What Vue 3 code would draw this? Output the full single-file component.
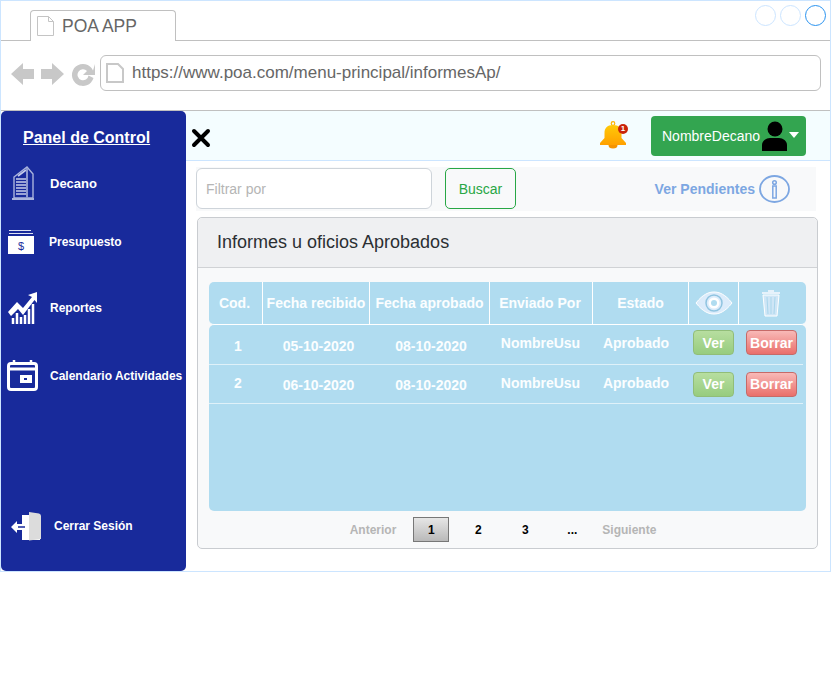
<script setup>
const columns = ['Cod.', 'Fecha recibido', 'Fecha aprobado', 'Enviado Por', 'Estado']
const rows = [
  { id: 1, received: '05-10-2020', approved: '08-10-2020', user: 'NombreUsu', state: 'Aprobado' },
  { id: 2, received: '06-10-2020', approved: '08-10-2020', user: 'NombreUsu', state: 'Aprobado' },
]
const pages = ['1', '2', '3', '...']
</script>

<template>
  <div class="window">
    <!-- pestaña -->
    <div class="tabbar">
      <div class="tab">
        <svg class="doc" width="17" height="20" viewBox="0 0 17 20">
          <path d="M.5.5h11l5 5v14H.5z M11.5.5v5h5" fill="#fff" stroke="#c4c4c4" />
        </svg>
        <span>POA APP</span>
      </div>
      <div class="dots">
        <i></i><i></i><i class="on"></i>
      </div>
    </div>

    <!-- direccion -->
    <div class="addressbar">
      <svg class="nav" width="86" height="26" viewBox="0 0 86 26">
        <path d="M0 13 12 2v6h11v10H12v6z" fill="#c8c8c8" />
        <path d="M53 13 41 2v6H30v10h11v6z" fill="#c8c8c8" />
        <path d="M82 9.500A11 11 0 1 0 82.500 17l-5-2.500A5.500 5.500 0 1 1 76 10l-4 4h12V3z" fill="#c8c8c8" />
      </svg>
      <div class="url">
        <svg width="18" height="20" viewBox="0 0 18 20">
          <path d="M1 1h11l5 5v13H1z" fill="#fff" stroke="#c8c8c8" stroke-width="2" />
        </svg>
        <span>https://www.poa.com/menu-principal/informesAp/</span>
      </div>
    </div>

    <div class="app">
      <!-- menu lateral -->
      <aside class="sidebar">
        <h1>Panel de Control</h1>
        <a class="item decano">
          <svg width="22" height="34" viewBox="0 0 22 34">
            <path d="M2 11 15 1l6 7v24H2z" fill="none" stroke="#a9b3dc" stroke-width="1.400" />
            <path d="M4 13h10M4 16h10M4 19h10M4 22h10M4 25h10M4 28h10M6 10l8-6" stroke="#c6cdea" stroke-width="1.600" />
            <path d="M15 2v30" stroke="#8d99d0" stroke-width="2" />
            <path d="M0 33h22" stroke="#a9b3dc" stroke-width="2" />
          </svg>
          <span>Decano</span>
        </a>
        <a class="item presupuesto">
          <svg width="26" height="24" viewBox="0 0 26 24">
            <path d="M1 0h22v1H1zM1 3h24v1H1z" fill="#dfe3f4" />
            <path d="M0 6h26v18H0z" fill="#fff" />
            <text x="13" y="20" text-anchor="middle" font-size="11" font-weight="400" font-family="Liberation Sans" fill="#182a9b">$</text>
          </svg>
          <span>Presupuesto</span>
        </a>
        <a class="item reportes">
          <svg width="30" height="34" viewBox="0 0 30 34">
            <path d="M0 21 9 11l6 6L24 6l-4-2L29 1v11l-2.500-3L15 24l-5-6-7 7z" fill="#fff" />
            <path d="M5 33v-6M9 33V22M13 33v-7M17 33v-9M21 33V18M25 33V13" stroke="#fff" stroke-width="2.500" />
          </svg>
          <span>Reportes</span>
        </a>
        <a class="item calendario">
          <svg width="31" height="31" viewBox="0 0 31 31">
            <rect x="1.500" y="3.500" width="28" height="26" rx="2.500" fill="none" stroke="#fff" stroke-width="3" />
            <path d="M1 9h29" stroke="#fff" stroke-width="3" />
            <path d="M7 0v5M24 0v5" stroke="#fff" stroke-width="2.500" />
            <path d="M13 15h12v8H13z" fill="#fff" />
            <path d="M17 18h3v2h-3z" fill="#182a9b" />
          </svg>
          <span>Calendario Actividades</span>
        </a>
        <a class="item cerrar">
          <svg width="31" height="31" viewBox="0 0 31 31">
            <path d="M11 5h18v25H11z" fill="#fff" />
            <path d="M18 2l10 1.500q2 .5 2 2.500v23l-12 1.500z" fill="#dcdcdc" />
            <path d="M0 17l6-6v3h9.500v6H6v3z" fill="#fff" />
            <path d="M7 17h7" stroke="#182a9b" stroke-width="1.500" />
          </svg>
          <span>Cerrar Sesión</span>
        </a>
      </aside>

      <main class="content">
        <!-- barra superior -->
        <header class="topbar">
          <svg class="close" width="20" height="20" viewBox="0 0 20 20">
            <path d="M3 3l14 14M17 3 3 17" stroke="#000" stroke-width="4" stroke-linecap="round" />
          </svg>
          <div class="bell">
            <svg width="28" height="28" viewBox="0 0 28 28">
              <defs>
                <linearGradient id="bellfill" x1="0" y1="0" x2="0" y2="1">
                  <stop offset="0" stop-color="#ffca08" />
                  <stop offset="1" stop-color="#ffa000" />
                </linearGradient>
              </defs>
              <circle cx="14" cy="2.500" r="1.800" fill="none" stroke="#ffb300" stroke-width="1.200" />
              <path d="M14 4c6 0 8.500 3.500 8.500 8v5l4.500 5v2H1v-2l4.500-5v-5c0-4.500 2.500-8 8.500-8z" fill="url(#bellfill)" />
              <path d="M9.500 24h9a4.500 3.500 0 0 1-9 0z" fill="#f59300" />
            </svg>
            <b>1</b>
          </div>
          <button class="user">
            <span>NombreDecano</span>
            <svg width="27" height="30" viewBox="0 0 27 30">
              <circle cx="14" cy="8" r="7.500" fill="#000" />
              <path d="M1 30v-6c0-4 4-7 8-7h9c4 0 8 3 8 7v6z" fill="#000" />
            </svg>
            <em></em>
          </button>
        </header>

        <!-- filtro -->
        <div class="filter">
          <input class="search" type="text" placeholder="Filtrar por" />
          <button class="find">Buscar</button>
          <a class="pending">
            <span>Ver Pendientes</span>
            <svg width="31" height="28" viewBox="0 0 31 28">
              <ellipse cx="15.500" cy="14" rx="14.500" ry="13" fill="none" stroke="#7da7e2" stroke-width="1.800" />
              <path d="M13.800 11h3.400v12h-3.400z" fill="none" stroke="#7da7e2" stroke-width="1.500" />
              <circle cx="15.500" cy="7.500" r="1.800" fill="none" stroke="#7da7e2" stroke-width="1.500" />
            </svg>
          </a>
        </div>

        <!-- tarjeta -->
        <section class="card">
          <h2>Informes u oficios Aprobados</h2>
          <div class="card-body">
            <div class="thead">
              <div v-for="col in columns" :key="col">{{ col }}</div>
              <div>
                <svg width="38" height="24" viewBox="0 0 38 24">
                  <path d="M1 12C8 3 14 1 19 1s11 2 18 11c-7 9-13 11-18 11S8 21 1 12z" fill="#dcecfb" stroke="#fff" />
                  <circle cx="19" cy="12" r="8" fill="none" stroke="#90c4e0" stroke-width="1.500" />
                  <circle cx="19" cy="12" r="5.500" fill="#fff" />
                  <circle cx="19" cy="12" r="3" fill="#b0dcf0" />
                </svg>
              </div>
              <div>
                <svg class="trash" width="20" height="27" viewBox="0 0 20 27">
                  <path d="M1 3h18M7 1h6" stroke="#e6f2fb" stroke-width="2" />
                  <path d="M2 5l2 21h12l2-21z" fill="#cfe6f6" stroke="#fff" />
                  <path d="M6 7l1 17M10 7v17M14 7l-1 17" stroke="#a9d6ec" />
                </svg>
              </div>
            </div>
            <div class="tbody">
              <div v-for="row in rows" :key="row.id" class="row">
                <div class="cell id">{{ row.id }}</div>
                <div class="cell received">{{ row.received }}</div>
                <div class="cell approved">{{ row.approved }}</div>
                <div class="cell up user-cell">{{ row.user }}</div>
                <div class="cell up state">{{ row.state }}</div>
                <div class="cell act ver-cell"><button class="ver">Ver</button></div>
                <div class="cell act borrar-cell"><button class="borrar">Borrar</button></div>
              </div>
            </div>
            <nav class="pager">
              <span class="muted">Anterior</span>
              <span v-for="(p, i) in pages" :key="p" class="page" :class="{ active: i === 0 }">{{ p }}</span>
              <span class="muted">Siguiente</span>
            </nav>
          </div>
        </section>
      </main>
    </div>
  </div>
</template>

<style scoped>
.window {
  width: 831px;
  height: 572px;
  box-sizing: border-box;
  border: 1px solid #cce5ff;
  font-family: "Liberation Sans", Arial, sans-serif;
  background: #fff;
  display: flex;
  flex-direction: column;
}

/* ── navegador ── */
.tabbar {
  height: 40px;
  box-sizing: border-box;
  flex-shrink: 0;
  border-bottom: 1px solid #c0c0c0;
  display: flex;
  justify-content: space-between;
  align-items: flex-end;
  padding: 0 4px 0 29px;
}
.tab {
  width: 146px;
  height: 31px;
  box-sizing: border-box;
  border: 1px solid #c0c0c0;
  border-bottom: none;
  border-radius: 4px 4px 0 0;
  background: #fff;
  margin-bottom: -1px;
  display: flex;
  align-items: center;
  gap: 8px;
  padding-left: 6px;
  font-size: 17.500px;
  color: #666;
}
.dots {
  align-self: flex-start;
  display: flex;
  gap: 4px;
  margin-top: 4px;
}
.dots i {
  width: 21px;
  height: 21px;
  box-sizing: border-box;
  border: 1px solid #cce5ff;
  border-radius: 50%;
}
.dots i.on {
  border-color: #2a93f0;
}
.addressbar {
  height: 70px;
  flex-shrink: 0;
  box-sizing: border-box;
  border-bottom: 1px solid #c0c0c0;
  display: flex;
  align-items: flex-start;
  padding: 14px 9px 0 10px;
  gap: 3px;
}
.nav {
  margin-top: 6px;
}
.url {
  flex: 1;
  height: 36px;
  box-sizing: border-box;
  border: 1px solid #c0c0c0;
  border-radius: 6px;
  display: flex;
  align-items: center;
  gap: 8px;
  padding-left: 5px;
  font-size: 17px;
  color: #666;
}

/* ── app ── */
.app {
  flex: 1;
  display: flex;
  min-height: 0;
}
.sidebar {
  width: 185px;
  flex-shrink: 0;
  box-sizing: border-box;
  background: #182a9b;
  border-radius: 5px;
  color: #fff;
  padding-top: 17px;
  display: flex;
  flex-direction: column;
}
.sidebar h1 {
  margin: 0 0 0 22px;
  font-size: 16px;
  line-height: 19px;
  font-weight: 700;
  text-decoration: underline;
}
.item {
  display: flex;
  align-items: center;
  font-size: 12px;
  font-weight: 700;
  white-space: nowrap;
}
.decano {
  margin: 19px 0 0 11px;
  gap: 16px;
  font-size: 13px;
}
.presupuesto {
  margin: 30px 0 0 7px;
  gap: 15px;
}
.reportes {
  margin: 37px 0 0 7px;
  gap: 12px;
}
.calendario {
  margin: 35px 0 0 6px;
  gap: 12px;
}
.cerrar {
  margin: 119px 0 0 10px;
  gap: 12px;
}

.content {
  flex: 1;
  min-width: 0;
}
.topbar {
  height: 50px;
  box-sizing: border-box;
  background: #f4fdff;
  border-bottom: 1px solid #cce5ff;
  display: flex;
  align-items: center;
  padding: 0 24px 0 5px;
}
.close {
  margin-top: 4px;
}
.bell {
  position: relative;
  margin-left: auto;
  margin-right: 24px;
  width: 28px;
  height: 28px;
  margin-top: -2px;
}
.bell b {
  position: absolute;
  top: 3px;
  right: -1px;
  width: 10px;
  height: 10px;
  border-radius: 50%;
  background: #c9240b;
  color: #fff;
  font-size: 8px;
  line-height: 10px;
  text-align: center;
}
.user {
  width: 155px;
  height: 40px;
  margin-top: 1px;
  border: none;
  border-radius: 4px;
  background: #33a550;
  color: #fff;
  font: 14px "Liberation Sans", Arial, sans-serif;
  display: flex;
  align-items: center;
  padding: 0 0 0 11px;
}
.user svg {
  margin-left: 1px;
}
.user em {
  margin-left: 1px;
  margin-top: -3px;
  border: 5px solid transparent;
  border-top: 6px solid #fff;
  border-bottom: none;
}
.filter {
  margin: 6px 14px 0 10px;
  height: 44px;
  box-sizing: border-box;
  padding-top: 1px;
  background: #f8f9fa;
  display: flex;
  align-items: flex-start;
}
.search {
  width: 236px;
  height: 41px;
  box-sizing: border-box;
  border: 1px solid #ced4da;
  border-radius: 6px;
  padding: 0 9px;
  font: 14px "Liberation Sans", Arial, sans-serif;
  background: #fff;
}
.search::placeholder {
  color: #b5b5b5;
}
.find {
  width: 71px;
  height: 41px;
  margin-left: 13px;
  border: 1px solid #28a745;
  border-radius: 5px;
  background: #f8f9fa;
  color: #28a745;
  font: 14px "Liberation Sans", Arial, sans-serif;
}
.pending {
  margin-left: auto;
  margin-right: 26px;
  margin-top: 7px;
  display: flex;
  align-items: center;
  gap: 4px;
  color: #7da7e2;
  font-size: 14px;
  font-weight: 700;
}
.card {
  margin: 6px 12px 0 11px;
  height: 332px;
  box-sizing: border-box;
  border: 1px solid #c9ccd0;
  border-radius: 5px;
  background: #f8f9fa;
}
.card h2 {
  margin: 0;
  height: 50px;
  box-sizing: border-box;
  border-bottom: 1px solid #d0d2d5;
  border-radius: 5px 5px 0 0;
  background: #eff0f2;
  padding-left: 19px;
  font-size: 18px;
  font-weight: 400;
  line-height: 48px;
  color: #2b2f33;
}
.card-body {
  padding: 14px 11px 0;
}
.thead,
.row {
  display: grid;
  grid-template-columns: 54px 107px 120px 103px 96px 50px 67px;
  width: 597px;
}
.thead {
  height: 43px;
  box-sizing: border-box;
  background: #b0dcf0;
  border-bottom: 1px solid #fff;
  border-radius: 5px;
  color: #fbfeff;
  font-size: 14px;
  font-weight: 700;
}
.thead > div {
  display: flex;
  align-items: center;
  justify-content: center;
  border-right: 1px solid #fff;
  white-space: nowrap;
}
.thead > div:first-child {
  padding-right: 2px;
}
.thead > div:nth-child(4) {
  padding-right: 2px;
}
.thead > div:last-child {
  border-right: none;
}
.trash {
  margin-right: 4px;
}
.tbody {
  height: 186px;
  width: 597px;
  background: #b0dcf0;
  border-radius: 5px;
}
.row {
  width: 594px;
  height: 39.500px;
  box-sizing: border-box;
  border-bottom: 1px solid #dff1f9;
  color: #fbfeff;
  font-size: 14px;
  font-weight: 700;
}
.cell {
  display: flex;
  align-items: center;
  justify-content: center;
  padding-top: 3px;
  white-space: nowrap;
}
.cell.id,
.cell.received {
  padding-left: 4px;
}
.cell.approved {
  padding-left: 2px;
}
.cell.up {
  padding-top: 0;
  padding-bottom: 2px;
}
.cell.user-cell {
  padding-right: 2px;
}
.cell.state {
  padding-right: 10px;
}
.row:nth-child(2) .cell.id {
  padding-top: 0;
  padding-bottom: 2px;
}
.cell.act {
  align-items: flex-start;
  justify-content: flex-start;
  padding-top: 5px;
}
.row:nth-child(2) .cell.act {
  padding-top: 7px;
}
.ver-cell {
  padding-left: 4px;
}
.borrar-cell {
  padding-left: 7px;
}
.ver,
.borrar {
  height: 25px;
  padding: 0;
  border-radius: 4px;
  color: #fff;
  font: 700 14px "Liberation Sans", Arial, sans-serif;
}
.ver {
  width: 41px;
  border: 1px solid #91bd78;
  background: linear-gradient(#b7dea0, #97cc7e);
}
.borrar {
  width: 51px;
  border: 1px solid #c66a68;
  background: linear-gradient(#f8b9b7, #ea6f6b);
}
.pager {
  height: 37px;
  display: flex;
  align-items: center;
  justify-content: center;
  font-size: 12px;
  font-weight: 700;
  padding-right: 9px;
  box-sizing: border-box;
}
.muted {
  color: #b5b5b5;
}
.page {
  width: 36px;
  height: 25px;
  margin-left: 11px;
  box-sizing: border-box;
  display: flex;
  align-items: center;
  justify-content: center;
  color: #000;
}
.muted + .page {
  margin-left: 17px;
}
.page.active {
  border: 1px solid #777;
  background: linear-gradient(#e6e6e6, #b9b9b9);
}
.page + .muted {
  margin-left: 12px;
}
</style>

<style>
html,
body {
  margin: 0;
  background: #fff;
}
</style>
